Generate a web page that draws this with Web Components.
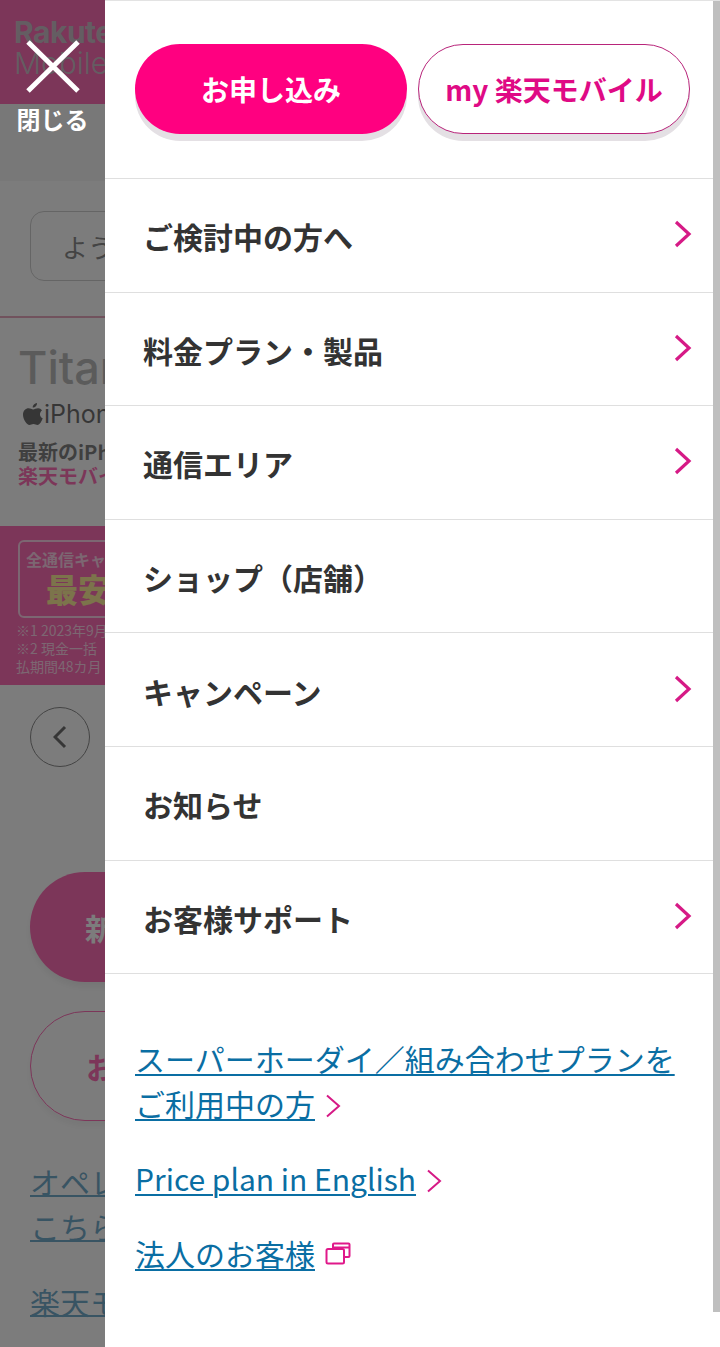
<!DOCTYPE html>
<html lang="ja">
<head>
<meta charset="utf-8">
<title>楽天モバイル</title>
<style>
  html,body{margin:0;padding:0;height:1347px;overflow:hidden;background:#fff;}
  body{font-family:'Noto Sans CJK JP','Noto Sans',sans-serif;}
</style>
</head>
<body>
<rm-app>
  <rm-page slot="page"></rm-page>
  <rm-drawer slot="drawer">
    <rm-cta slot="cta" data-kind="primary">お申し込み</rm-cta>
    <rm-cta slot="cta" data-kind="outline">my 楽天モバイル</rm-cta>
    <rm-menu-row slot="menu" data-arrow>ご検討中の方へ</rm-menu-row>
    <rm-menu-row slot="menu" data-arrow>料金プラン・製品</rm-menu-row>
    <rm-menu-row slot="menu" data-arrow>通信エリア</rm-menu-row>
    <rm-menu-row slot="menu">ショップ（店舗）</rm-menu-row>
    <rm-menu-row slot="menu" data-arrow>キャンペーン</rm-menu-row>
    <rm-menu-row slot="menu">お知らせ</rm-menu-row>
    <rm-menu-row slot="menu" data-arrow>お客様サポート</rm-menu-row>
    <rm-sub-link slot="links" data-icon="chevron">スーパーホーダイ／組み合わせプランをご利用中の方</rm-sub-link>
    <rm-sub-link slot="links" data-icon="chevron">Price plan in English</rm-sub-link>
    <rm-sub-link slot="links" data-icon="window">法人のお客様</rm-sub-link>
  </rm-drawer>
</rm-app>

<script>
const rmAppTemplate = document.createElement('template');
rmAppTemplate.innerHTML = `
<style>
  :host{
    display:block;
    position:relative;
    width:720px;
    height:1347px;
    overflow:hidden;
  }
  .scrim{
    position:absolute;
    inset:0;
    background:rgba(74,74,74,.725);
  }
  .close{
    position:absolute;
    left:0;
    top:0;
    width:105px;
    display:flex;
    flex-direction:column;
    align-items:center;
    color:#fff;
    font-size:24px;
    font-weight:700;
    line-height:30px;
  }
  .close svg{
    display:block;
    margin-top:39px;
    margin-bottom:9px;
  }
  ::slotted([slot="drawer"]){
    position:absolute;
    left:105px;
    top:0;
  }
</style>
<slot name="page"></slot>
<div class="scrim"></div>
<div class="close">
  <svg width="56" height="56" viewBox="0 0 56 56"><path d="M3 3 L53 52 M53 3 L3 52" stroke="#fff" stroke-width="5" fill="none"/></svg>
  <span>閉じる</span>
</div>
<slot name="drawer"></slot>
`;

class RmApp extends HTMLElement {
  constructor() {
    super();
    const shadow = this.attachShadow({mode: 'open'});
    shadow.append(rmAppTemplate.content.cloneNode(true));
  }
}

// the page that sits behind the scrim, mostly covered by the drawer
const rmPageTemplate = document.createElement('template');
rmPageTemplate.innerHTML = `
<style>
  :host{
    display:block;
    width:720px;
    height:1347px;
    background:#fff;
    overflow:hidden;
    font-family:'Noto Sans CJK JP','Noto Sans',sans-serif;
    color:#000;
  }
  .logo-bar{
    height:104px;
    box-sizing:border-box;
    background:#ff0080;
    padding:17px 0 0 14px;
    color:#a98fa0;
    font-family:'Inter',sans-serif;
    font-size:30px;
    line-height:31px;
  }
  .logo-bar b{display:block;font-weight:700;letter-spacing:-.5px;}
  .logo-bar span{display:block;font-weight:300;}
  .gap-bar{height:77px;background:#eee;}
  .search{
    height:137px;
    box-sizing:border-box;
    padding:30px 0 0 30px;
    border-bottom:2px solid #d5688f;
  }
  .search div{
    height:70px;
    width:300px;
    box-sizing:border-box;
    border:1px solid #ababab;
    border-radius:14px;
    padding-left:31px;
    font-size:26px;
    line-height:70px;
    color:#333;
  }
  .hero{
    height:208px;
    box-sizing:border-box;
    padding:22px 0 0 18px;
  }
  .hero h2{
    margin:0;
    font-family:'Inter',sans-serif;
    font-size:45px;
    line-height:56px;
    font-weight:500;
    color:#888;
    white-space:nowrap;
  }
  .hero .device{
    display:flex;
    align-items:center;
    gap:1px;
    margin:2px 0 10px 5px;
    font-family:'Inter',sans-serif;
    font-size:25px;
    line-height:32px;
  }
  .hero p{margin:0;font-size:20px;line-height:24px;font-weight:700;white-space:nowrap;color:#222;}
  .hero p.pink{color:#ff0080;}
  .banner{
    height:159px;
    box-sizing:border-box;
    background:#ff0080;
    padding:14px 0 0 18px;
    color:#ffb3d9;
    white-space:nowrap;
  }
  .banner .box{
    width:300px;
    height:78px;
    box-sizing:border-box;
    border:2px solid #ffb3d9;
    border-radius:6px;
    padding:6px 0 0 6px;
    font-size:16px;
    line-height:22px;
    font-weight:700;
  }
  .banner .box b{display:block;padding-left:20px;font-size:32px;line-height:36px;font-weight:900;color:#ffe14d;}
  .banner .note{margin-top:3px;font-size:14px;line-height:18px;margin-left:-2px;}
  .pager{height:187px;box-sizing:border-box;padding:22px 0 0 30px;}
  .pager div{
    width:60px;
    height:60px;
    box-sizing:border-box;
    border:1px solid #333;
    border-radius:50%;
    display:flex;
    align-items:center;
    justify-content:center;
  }
  .pill{
    width:300px;
    height:110px;
    margin-left:30px;
    box-sizing:border-box;
    border-radius:55px;
    padding-left:55px;
    font-size:30px;
    font-weight:700;
    line-height:110px;
  }
  .pill.fill{background:#ff0080;color:#fff;box-shadow:0 5px 6px rgba(0,0,0,.1);margin-bottom:29px;}
  .pill.line{border:1px solid #ff0080;color:#ff0080;line-height:108px;box-shadow:0 5px 6px rgba(0,0,0,.08);margin-bottom:38px;}
  .text-links{margin-left:30px;font-size:30px;line-height:45px;color:#0a6ea3;white-space:nowrap;}
  .text-links a{display:block;text-decoration:underline;text-decoration-thickness:2px;}
  .text-links a + a{margin-bottom:30px;}
</style>
<div class="logo-bar"><b>Rakuten</b><span>Mobile</span></div>
<div class="gap-bar"></div>
<div class="search"><div>ようこそ</div></div>
<div class="hero">
  <h2>Titanium</h2>
  <div class="device">
    <svg width="20" height="24" viewBox="0 0 20 24"><path fill="#000" d="M14 1c.2 2.400-2 4.800-4.300 4.600C9.500 3.300 11.800 1.100 14 1zM19 8.400c-3 2-2.500 6.500.7 7.800-.9 2.700-3 6.800-5.200 6.800-1.500 0-2.200-.9-4-.9s-2.600.9-4 .9C3.800 23 0 17.500 0 12.800 0 8.500 2.700 6.300 5.600 6.300c1.800 0 3.300 1.100 4.600 1.100 1.200 0 2.900-1.200 4.900-1.200 1.600 0 3 .7 3.900 2.200z"/></svg>
    <span>iPhone</span>
  </div>
  <p>最新のiPhone</p>
  <p class="pink">楽天モバイル</p>
</div>
<div class="banner">
  <div class="box">全通信キャリア<b>最安</b></div>
  <div class="note">※1 2023年9月<br>※2 現金一括<br>払期間48カ月</div>
</div>
<div class="pager"><div>
  <svg width="14" height="24" viewBox="0 0 14 24"><path d="M12 2 L2 12 L12 22" stroke="#000" stroke-width="3" fill="none"/></svg>
</div></div>
<div class="pill fill">新規</div>
<div class="pill line">お申</div>
<div class="text-links">
  <a>オペレータ</a>
  <a>こちら</a>
  <a>楽天モバイル</a>
  <a>要手続き</a>
</div>
`;

class RmPage extends HTMLElement {
  constructor() {
    super();
    const shadow = this.attachShadow({mode: 'open'});
    shadow.append(rmPageTemplate.content.cloneNode(true));
  }
}

const rmDrawerTemplate = document.createElement('template');
rmDrawerTemplate.innerHTML = `
<style>
  :host{
    display:block;
    width:615px;
    height:1347px;
    box-sizing:border-box;
    background:#fff;
    border-top:1px solid #e3e3e3;
    font-family:'Noto Sans CJK JP','Noto Sans',sans-serif;
  }
  .cta-row{
    display:flex;
    gap:11px;
    height:178px;
    box-sizing:border-box;
    padding:43px 0 0 30px;
    border-bottom:1px solid #dfdfdf;
  }
  .menu{display:flex;flex-direction:column;}
  .links{
    display:flex;
    flex-direction:column;
    gap:30px;
    padding:62px 0 0 30px;
  }
  .scrollbar{
    position:absolute;
    right:0;
    top:0;
    width:7px;
    height:1311px;
    background:#bfbfbf;
  }
</style>
<div class="cta-row"><slot name="cta"></slot></div>
<div class="menu"><slot name="menu"></slot></div>
<div class="links"><slot name="links"></slot></div>
<div class="scrollbar"></div>
`;

class RmDrawer extends HTMLElement {
  constructor() {
    super();
    const shadow = this.attachShadow({mode: 'open'});
    shadow.append(rmDrawerTemplate.content.cloneNode(true));
  }
}

const rmCtaTemplate = document.createElement('template');
rmCtaTemplate.innerHTML = `
<style>
  :host{
    display:flex;
    align-items:center;
    justify-content:center;
    width:272px;
    height:90px;
    box-sizing:border-box;
    border-radius:45px;
    font-size:28px;
    font-weight:700;
    line-height:40px;
    box-shadow:0 7px 0 #e4e0e4;
    white-space:nowrap;
  }
  :host([data-kind="primary"]){
    background:#ff0080;
    color:#fff;
  }
  :host([data-kind="outline"]){
    background:#fff;
    color:#df0a85;
    border:1px solid #b8247a;
  }
</style>
<slot></slot>
`;

class RmCta extends HTMLElement {
  constructor() {
    super();
    const shadow = this.attachShadow({mode: 'open'});
    shadow.append(rmCtaTemplate.content.cloneNode(true));
  }
}

const rmMenuRowTemplate = document.createElement('template');
rmMenuRowTemplate.innerHTML = `
<style>
  :host{
    display:flex;
    align-items:center;
    justify-content:space-between;
    height:113.6px;
    box-sizing:border-box;
    padding:2px 0 0 38px;
    border-bottom:1px solid #dfdfdf;
    color:#333;
    font-size:30px;
    font-weight:700;
    line-height:44px;
  }
  svg{
    display:none;
    margin:-4px 28px 0 0;
  }
  :host([data-arrow]) svg{display:block;}
</style>
<span><slot></slot></span>
<svg width="18" height="28" viewBox="0 0 18 28"><path d="M2 2 L15 14 L2 26" stroke="#d61a86" stroke-width="3.200" fill="none"/></svg>
`;

class RmMenuRow extends HTMLElement {
  constructor() {
    super();
    const shadow = this.attachShadow({mode: 'open'});
    shadow.append(rmMenuRowTemplate.content.cloneNode(true));
  }
}

const rmSubLinkTemplate = document.createElement('template');
rmSubLinkTemplate.innerHTML = `
<style>
  :host{
    display:block;
    width:548px;
    color:#0a6ea3;
    font-size:30px;
    line-height:45px;
  }
  a{
    color:inherit;
    text-decoration:underline;
    text-decoration-thickness:2px;
    text-underline-offset:3px;
  }
  svg{
    margin-left:10px;
    vertical-align:-2px;
  }
</style>
<a href="#"><slot></slot></a><span id="icon"></span>
`;

class RmSubLink extends HTMLElement {
  constructor() {
    super();
    const shadow = this.attachShadow({mode: 'open'});
    shadow.append(rmSubLinkTemplate.content.cloneNode(true));
  }

  connectedCallback() {
    const icon = this.shadowRoot.getElementById('icon');
    switch (this.getAttribute('data-icon')) {
      case 'window':
        icon.innerHTML = '<svg width="26" height="24" viewBox="0 0 26 24" style="vertical-align:0"><path d="M8 7 V2.500 Q8 1.500 9 1.500 H23.500 Q24.500 1.500 24.500 2.500 V14 Q24.500 15 23.500 15 H19 M8 5.500 H24.500" stroke="#e0188a" stroke-width="2" fill="none"/><rect x="1.500" y="7" width="17.500" height="14.500" rx="1.500" stroke="#e0188a" stroke-width="2" fill="none"/></svg>';
        break;
      default:
        icon.innerHTML = '<svg width="17" height="24" viewBox="0 0 17 24"><path d="M2 1.500 L14 12 L2 22.500" stroke="#d61a86" stroke-width="2" fill="none"/></svg>';
        break;
    }
  }
}

customElements.define('rm-app', RmApp);
customElements.define('rm-page', RmPage);
customElements.define('rm-drawer', RmDrawer);
customElements.define('rm-cta', RmCta);
customElements.define('rm-menu-row', RmMenuRow);
customElements.define('rm-sub-link', RmSubLink);
</script>
</body>
</html>
